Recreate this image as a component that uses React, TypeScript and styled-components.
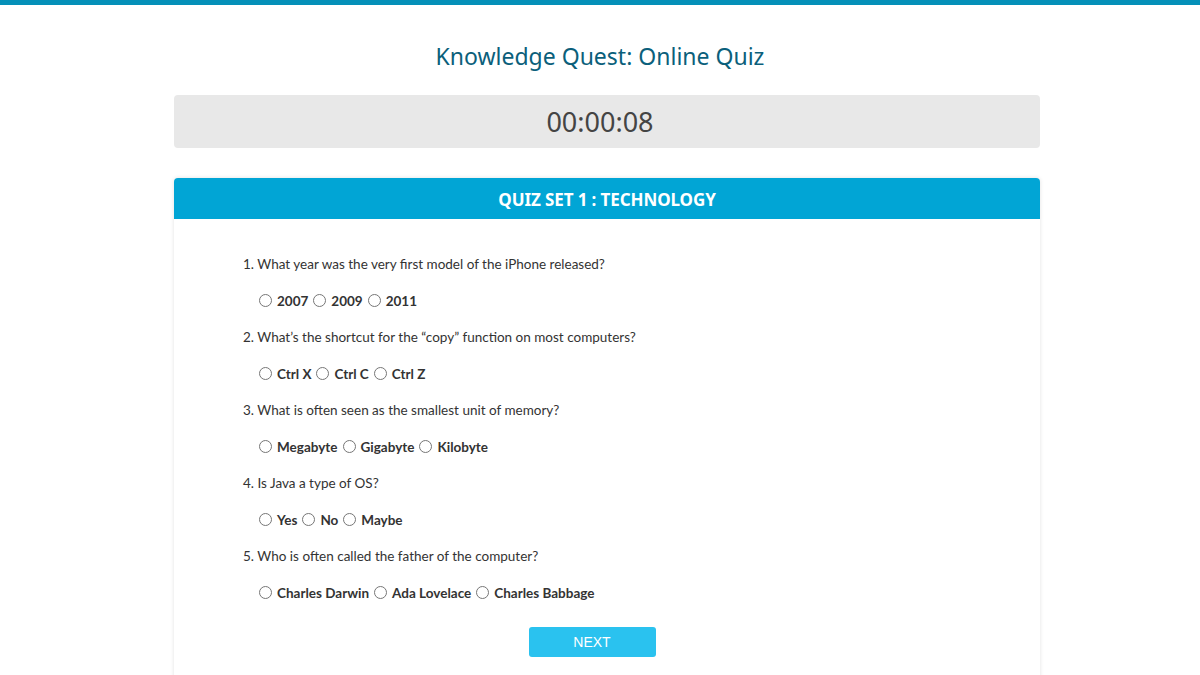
import * as React from "react";
import styled, { createGlobalStyle } from "styled-components";

const GlobalStyle = createGlobalStyle`
  html, body {
    margin: 0;
    padding: 0;
    background: #ffffff;
  }
  body {
    border-top: 5px solid #0590b8;
    font-family: "Open Sans", "Noto Sans", sans-serif;
  }
`;

const Page = styled.div`
  width: 866px;
  margin: 0 auto;
  padding: 36px 0 0 14px;
`;

const Title = styled.h1`
  margin: 0 0 0 -14px;
  text-align: center;
  font-family: "Noto Sans", "Open Sans", sans-serif;
  font-weight: 400;
  font-size: 23px;
  line-height: 30px;
  color: #0b5f7b;
`;

const Timer = styled.div`
  margin-top: 24px;
  height: 53px;
  padding-right: 14px;
  border-radius: 4px;
  background: #e8e8e8;
  display: flex;
  align-items: center;
  justify-content: center;
  font-family: "Noto Sans", "Open Sans", sans-serif;
  font-size: 27px;
  color: #444444;
`;

const Card = styled.div`
  margin-top: 30px;
  border-radius: 4px 4px 0 0;
  background: #fff;
  box-shadow: 0 0 4px rgba(0, 0, 0, 0.12);
  overflow: hidden;
`;

const CardHeader = styled.div`
  height: 41px;
  background: #01a5d5;
  color: #ffffff;
  display: flex;
  align-items: center;
  justify-content: center;
  padding-top: 1px;
  box-sizing: border-box;
  font-family: "Noto Sans", "Open Sans", sans-serif;
  font-weight: 700;
  font-size: 17px;
  letter-spacing: -0.1px;
`;

const CardBody = styled.form`
  padding: 36px 69px 40px;
`;

const Question = styled.div`
  margin-bottom: 18px;
`;

const QuestionText = styled.p`
  margin: 0;
  font-family: Lato, "Noto Sans", sans-serif;
  font-size: 13.5px;
  line-height: 18px;
  color: #333333;
`;

const Options = styled.div`
  margin-top: 19px;
  padding-left: 11px;
  display: flex;
  align-items: center;
  font-family: Lato, "Noto Sans", sans-serif;
  font-size: 13.5px;
  font-weight: 700;
  line-height: 18px;
  color: #333333;
`;

const Option = styled.label`
  display: inline-flex;
  align-items: center;

  & input {
    margin: 0 5px 2px 5px;
    width: 13px;
    height: 13px;
  }
`;

const Footer = styled.div`
  display: flex;
  justify-content: center;
  margin-top: 25px;
`;

const NextButton = styled.button`
  width: 127px;
  height: 30px;
  border: none;
  border-radius: 3px;
  background: #2ac2ef;
  color: #ffffff;
  font-family: "Liberation Sans", Arial, sans-serif;
  font-size: 14px;
  margin-left: -30px;
  cursor: pointer;
`;

const questions = [
  {
    text: "1. What year was the very first model of the iPhone released?",
    options: ["2007", "2009", "2011"],
  },
  {
    text: "2. What\u2019s the shortcut for the \u201ccopy\u201d function on most computers?",
    options: ["Ctrl X", "Ctrl C", "Ctrl Z"],
  },
  {
    text: "3. What is often seen as the smallest unit of memory?",
    options: ["Megabyte", "Gigabyte", "Kilobyte"],
  },
  {
    text: "4. Is Java a type of OS?",
    options: ["Yes", "No", "Maybe"],
  },
  {
    text: "5. Who is often called the father of the computer?",
    options: ["Charles Darwin", "Ada Lovelace", "Charles Babbage"],
  },
];

export default function App() {
  return (
    <>
      <GlobalStyle />
      <Page>
        <Title>Knowledge Quest: Online Quiz</Title>
        <Timer>00:00:08</Timer>
        <Card>
          <CardHeader>QUIZ SET 1 : TECHNOLOGY</CardHeader>
          <CardBody onSubmit={(e) => e.preventDefault()}>
            {questions.map((q, i) => (
              <Question key={i}>
                <QuestionText>{q.text}</QuestionText>
                <Options>
                  {q.options.map((o) => (
                    <Option key={o}>
                      <input type="radio" name={`q${i}`} value={o} />
                      {o}
                    </Option>
                  ))}
                </Options>
              </Question>
            ))}
            <Footer>
              <NextButton type="submit">NEXT</NextButton>
            </Footer>
          </CardBody>
        </Card>
      </Page>
    </>
  );
}
